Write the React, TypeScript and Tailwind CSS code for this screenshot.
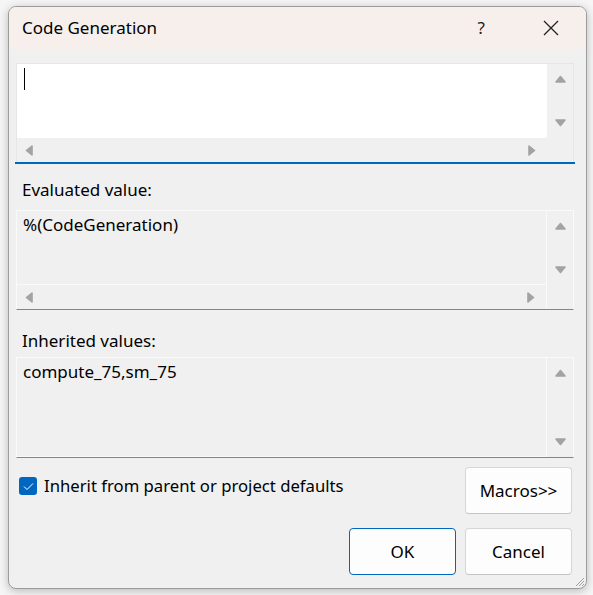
import type { ReactNode } from 'react'

type Dir = 'up' | 'down' | 'left' | 'right'

// Small filled scroll arrow, the classic Win32 style
function Arrow({ dir }: { dir: Dir }) {
  const pts: Record<Dir, string> = {
    up: '1,7 5.5,1.5 10,7',
    down: '1,1 5.5,6.5 10,1',
    left: '7,1 1.5,5.5 7,10',
    right: '1,1 6.5,5.5 1,10',
  }
  const vertical = dir === 'up' || dir === 'down'
  return (
    <svg
      width={vertical ? 11 : 8}
      height={vertical ? 8 : 11}
      viewBox={vertical ? '0 0 11 8' : '0 0 8 11'}
      className="block"
    >
      <polygon points={pts[dir]} fill="#a3a3a3" stroke="#a3a3a3" strokeWidth="1.6" strokeLinejoin="round" />
    </svg>
  )
}

function VScroll({ height }: { height: string }) {
  return (
    <div className={`w-[26px] ${height} flex flex-col items-center justify-between py-[11px]`}>
      <Arrow dir="up" />
      <Arrow dir="down" />
    </div>
  )
}

function HScroll() {
  return (
    <div className="h-[24px] flex items-center justify-between pl-[8px] pr-[11px]">
      <Arrow dir="left" />
      <Arrow dir="right" />
    </div>
  )
}

function ReadOnlyBox({
  children,
  textHeight,
  hscroll,
}: {
  children: ReactNode
  textHeight: string
  hscroll?: boolean
}) {
  return (
    <div className="bg-[#f0f0f0] border border-[#fafafa] border-b-[#858585]">
      <div className="flex">
        <div className={`flex-1 ${textHeight} border-r border-b border-[#fafafa] px-[6px] pt-[3px] text-[17px] leading-[22px] text-black`}>
          {children}
        </div>
        <VScroll height={textHeight} />
      </div>
      {hscroll && (
        <div className="flex">
          <div className="flex-1 border-r border-[#fafafa]">
            <HScroll />
          </div>
          <div className="w-[26px]" />
        </div>
      )}
    </div>
  )
}

function Button({ label, focused }: { label: string; focused?: boolean }) {
  return (
    <button
      className={`w-[107px] h-[47px] rounded-[4px] bg-[#fdfdfd] text-[17px] text-black border ${
        focused ? 'border-[#0067c0]' : 'border-[#d6d6d6] border-b-[#c4c4c4]'
      }`}
    >
      {label}
    </button>
  )
}

export default function App() {
  return (
    <div className="w-[593px] h-[595px] bg-[#f6f6f6] pl-[8px] pt-[6px] font-['Segoe_UI','Noto_Sans',sans-serif]">
      <div className="w-[579px] h-[583px] rounded-[8px] border border-[#9c9c9c] bg-[#f0f0f0] overflow-hidden shadow-[0_2px_10px_rgba(0,0,0,0.25)] relative flex flex-col">
        {/* Title bar */}
        <div className="h-[42px] bg-[#f7efec] flex items-center pl-[13px] shrink-0">
          <span className="text-[17px] text-black">Code Generation</span>
          <span className="ml-auto text-[17px] text-[#222] mr-[58px]">?</span>
          <svg width="16" height="16" viewBox="0 0 16 16" className="mr-[27px]">
            <path d="M1 1 L15 15 M15 1 L1 15" stroke="#222" strokeWidth="1.3" />
          </svg>
        </div>

        <div className="flex-1 pl-[7px] pr-[12px] pt-[14px] flex flex-col">
          {/* Editable field */}
          <div className="bg-[#f0f0f0] border border-[#e6e6e6] border-b-0">
            <div className="flex">
              <div className="flex-1 h-[74px] bg-white rounded-br-[3px] px-[7px] pt-[4px]">
                <div className="w-px h-[22px] bg-black" />
              </div>
              <VScroll height="h-[74px]" />
            </div>
            <div className="flex">
              <div className="flex-1">
                <HScroll />
              </div>
              <div className="w-[26px]" />
            </div>
          </div>
          <div className="h-[2px] bg-[#0067c0] -mx-px" />

          <div className="mt-[15px] mb-[9px] text-[17px] leading-[22px] pl-[6px] text-black">Evaluated value:</div>
          <ReadOnlyBox textHeight="h-[74px]" hscroll>
            %(CodeGeneration)
          </ReadOnlyBox>

          <div className="mt-[20px] mb-[5px] text-[17px] leading-[22px] pl-[6px] text-black">Inherited values:</div>
          <ReadOnlyBox textHeight="h-[99px]">compute_75,sm_75</ReadOnlyBox>

          {/* Footer: checkbox, macros and dialog buttons */}
          <div className="flex items-start mt-[9px]">
            <div className="flex items-center gap-[7px] pl-[3px] pt-[8px]">
              <div className="w-[18px] h-[18px] rounded-[3px] bg-[#0067c0] flex items-center justify-center">
                <svg width="11" height="9" viewBox="0 0 11 9">
                  <path d="M1 4.5 L4 7.5 L10 1.5" fill="none" stroke="white" strokeWidth="1" />
                </svg>
              </div>
              <span className="text-[16.7px] leading-[22px] text-black">Inherit from parent or project defaults</span>
            </div>
            <div className="ml-auto mr-[2px]">
              <Button label="Macros>>" />
            </div>
          </div>
          <div className="flex justify-end gap-[9px] mt-[14px] mr-[2px]">
            <Button label="OK" focused />
            <Button label="Cancel" />
          </div>
        </div>

        {/* Resize grip */}
        <svg width="12" height="12" viewBox="0 0 12 12" className="absolute right-[1px] bottom-[1px]">
          <path d="M11 3 L3 11 M11 6 L6 11 M11 9 L9 11" stroke="#a0a0a0" strokeWidth="1" />
        </svg>
      </div>
    </div>
  )
}
